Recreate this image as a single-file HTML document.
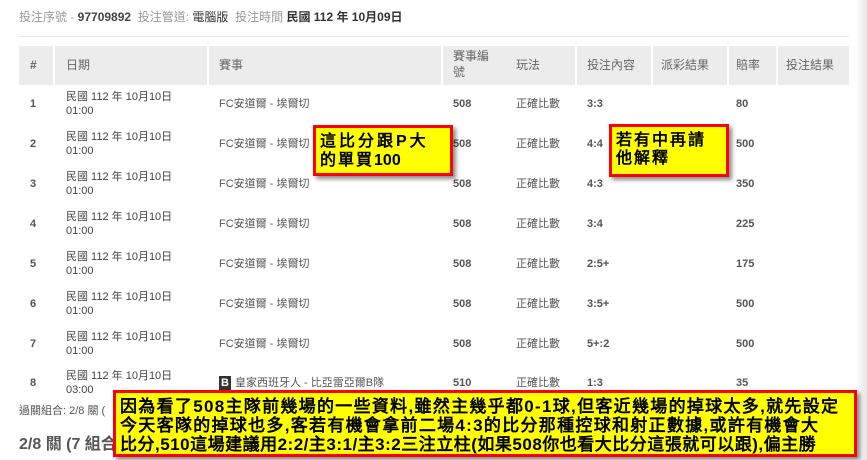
<!DOCTYPE html>
<html><head><meta charset="utf-8"><style>
body{margin:0;width:867px;height:460px;overflow:hidden;background:#fff;font-family:"Liberation Sans","Noto Sans CJK TC",sans-serif;position:relative;color:#555}
.a{position:absolute;white-space:nowrap;font-size:11px;line-height:14px}
.b{font-weight:bold}
.hd{position:absolute;top:46px;height:39px;background:#ececec}
.ht{position:absolute;font-size:12px;color:#666;line-height:16px}
.box{position:absolute;background:#ffff00;border:3px solid #f00;box-shadow:3px 3px 4px rgba(0,0,0,.45);color:#000;font-weight:bold;font-family:"Liberation Sans","WenQuanYi Zen Hei",sans-serif}
.d{color:#444}
</style></head><body>
<div style="position:absolute;right:0;top:0;width:12px;height:460px;background:linear-gradient(to right,#fff,#e6e6e6)"></div>
<div class="a" style="left:19px;top:10px;font-size:12px;color:#999">投注序號 - <b style="color:#444">97709892</b>&nbsp; 投注管道: <span style="color:#333">電腦版</span>&nbsp; 投注時間 <b style="color:#333">民國 112 年 10月09日</b></div>
<div style="position:absolute;left:18px;top:36px;width:831px;height:1px;background:#e8e8e8"></div>
<div class="hd" style="left:19px;width:34px"></div>
<div class="hd" style="left:55px;width:152px"></div>
<div class="hd" style="left:209px;width:232px"></div>
<div class="hd" style="left:443px;width:62px"></div>
<div class="hd" style="left:505px;width:70px"></div>
<div class="hd" style="left:577px;width:74px"></div>
<div class="hd" style="left:653px;width:74px"></div>
<div class="hd" style="left:729px;width:47px"></div>
<div class="hd" style="left:778px;width:71px"></div>
<div class="ht b" style="left:30px;top:57px">#</div>
<div class="ht" style="left:66px;top:57px">日期</div>
<div class="ht" style="left:219px;top:57px">賽事</div>
<div class="ht" style="left:453px;top:48px">賽事編<br>號</div>
<div class="ht" style="left:516px;top:57px">玩法</div>
<div class="ht" style="left:587px;top:57px">投注內容</div>
<div class="ht" style="left:661px;top:57px">派彩結果</div>
<div class="ht" style="left:736px;top:57px">賠率</div>
<div class="ht" style="left:786px;top:57px">投注結果</div>
<div class="a b" style="left:30px;top:97px">1</div><div class="a d" style="left:66px;top:90px">民國 112 年 10月10日<br>01:00</div><div class="a" style="left:219px;top:97px">FC安道爾 - 埃爾切</div><div class="a b" style="left:453px;top:97px">508</div><div class="a" style="left:516px;top:97px">正確比數</div><div class="a b" style="left:587px;top:97px">3:3</div><div class="a b" style="left:736px;top:97px">80</div>
<div class="a b" style="left:30px;top:137px">2</div><div class="a d" style="left:66px;top:130px">民國 112 年 10月10日<br>01:00</div><div class="a" style="left:219px;top:137px">FC安道爾 - 埃爾切</div><div class="a b" style="left:453px;top:137px">508</div><div class="a" style="left:516px;top:137px">正確比數</div><div class="a b" style="left:587px;top:137px">4:4</div><div class="a b" style="left:736px;top:137px">500</div>
<div class="a b" style="left:30px;top:177px">3</div><div class="a d" style="left:66px;top:170px">民國 112 年 10月10日<br>01:00</div><div class="a" style="left:219px;top:177px">FC安道爾 - 埃爾切</div><div class="a b" style="left:453px;top:177px">508</div><div class="a" style="left:516px;top:177px">正確比數</div><div class="a b" style="left:587px;top:177px">4:3</div><div class="a b" style="left:736px;top:177px">350</div>
<div class="a b" style="left:30px;top:217px">4</div><div class="a d" style="left:66px;top:210px">民國 112 年 10月10日<br>01:00</div><div class="a" style="left:219px;top:217px">FC安道爾 - 埃爾切</div><div class="a b" style="left:453px;top:217px">508</div><div class="a" style="left:516px;top:217px">正確比數</div><div class="a b" style="left:587px;top:217px">3:4</div><div class="a b" style="left:736px;top:217px">225</div>
<div class="a b" style="left:30px;top:257px">5</div><div class="a d" style="left:66px;top:250px">民國 112 年 10月10日<br>01:00</div><div class="a" style="left:219px;top:257px">FC安道爾 - 埃爾切</div><div class="a b" style="left:453px;top:257px">508</div><div class="a" style="left:516px;top:257px">正確比數</div><div class="a b" style="left:587px;top:257px">2:5+</div><div class="a b" style="left:736px;top:257px">175</div>
<div class="a b" style="left:30px;top:297px">6</div><div class="a d" style="left:66px;top:290px">民國 112 年 10月10日<br>01:00</div><div class="a" style="left:219px;top:297px">FC安道爾 - 埃爾切</div><div class="a b" style="left:453px;top:297px">508</div><div class="a" style="left:516px;top:297px">正確比數</div><div class="a b" style="left:587px;top:297px">3:5+</div><div class="a b" style="left:736px;top:297px">500</div>
<div class="a b" style="left:30px;top:337px">7</div><div class="a d" style="left:66px;top:330px">民國 112 年 10月10日<br>01:00</div><div class="a" style="left:219px;top:337px">FC安道爾 - 埃爾切</div><div class="a b" style="left:453px;top:337px">508</div><div class="a" style="left:516px;top:337px">正確比數</div><div class="a b" style="left:587px;top:337px">5+:2</div><div class="a b" style="left:736px;top:337px">500</div>
<div class="a b" style="left:30px;top:376px">8</div><div class="a d" style="left:66px;top:369px">民國 112 年 10月10日<br>03:00</div><div class="a" style="left:219px;top:376px"><span style="display:inline-block;background:#333;color:#fff;font-weight:bold;width:12px;text-align:center;margin-right:4px">B</span>皇家西班牙人 - 比亞雷亞爾B隊</div><div class="a b" style="left:453px;top:376px">510</div><div class="a" style="left:516px;top:376px">正確比數</div><div class="a b" style="left:587px;top:376px">1:3</div><div class="a b" style="left:736px;top:376px">35</div>
<div class="a" style="left:19px;top:404px">過關組合: 2/8 關 (</div>
<div class="a b" style="left:19px;top:436px;font-size:16px;line-height:18px;color:#555">2/8 關 (7 組合</div>
<div class="box" style="left:313px;top:125px;width:130px;height:45px;font-size:16px;line-height:19px;padding:0 0 0 4px;letter-spacing:3px"><div style="padding-top:4px">這比分跟P大<br><span style="letter-spacing:2px">的單買</span><span style="letter-spacing:0">100</span></div></div>
<div class="box" style="left:609px;top:124px;width:110px;height:47px;font-size:16px;line-height:18px;padding-left:4px;letter-spacing:2px"><div style="padding-top:5px">若有中再請<br>他解釋</div></div>
<div class="box" style="left:113px;top:390px;width:734px;height:61px;font-size:17px;line-height:19px;padding-left:4px;overflow:hidden;letter-spacing:1.3px"><div style="padding-top:4px">因為看了508主隊前幾場的一些資料,雖然主幾乎都0-1球,但客近幾場的掉球太多,就先設定<br>今天客隊的掉球也多,客若有機會拿前二場4:3的比分那種控球和射正數據,或許有機會大<br><span style="letter-spacing:0.5px">比分,510這場建議用2:2/主3:1/主3:2三注立柱(如果508你也看大比分這張就可以跟),偏主勝</span></div></div>
</body></html>
